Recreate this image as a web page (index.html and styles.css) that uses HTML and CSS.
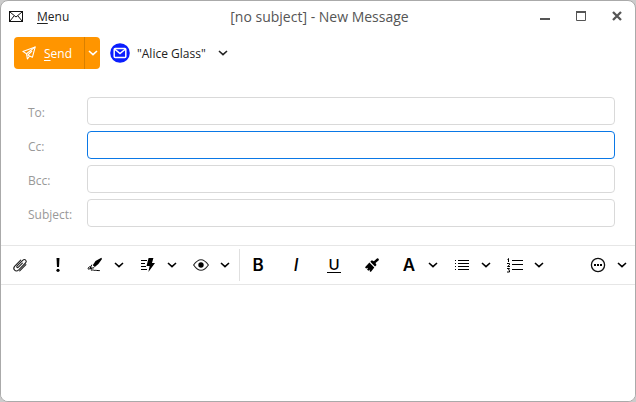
FILE: index.html
```html
<!DOCTYPE html>
<html lang="en">
<head>
    <meta charset="utf-8">
    <title>[no subject] - New Message</title>
    <link rel="stylesheet" href="styles.css">
</head>
<body>
    <svg class="defs" aria-hidden="true">
        <symbol id="chevron" viewBox="0 0 10 6">
            <path d="M1 1l4 3.6L9 1" fill="none" stroke="currentColor" stroke-width="1.6"/>
        </symbol>
    </svg>

    <div class="window">
        <header class="titlebar">
            <div class="titlebar-left">
                <svg class="app-icon" width="14" height="11" viewBox="0 0 14 11" fill="none" stroke="#111">
                    <rect x=".5" y=".5" width="13" height="10"/>
                    <path d="M1 1l6 5 6-5M1 10l4-5M13 10L9 5"/>
                </svg>
                <button class="menu-button" type="button"><u>M</u>enu</button>
            </div>
            <h1 class="title">[no subject] - New Message</h1>
            <div class="window-controls">
                <button type="button" aria-label="Minimize">
                    <svg width="10" height="10" viewBox="0 0 10 10"><path d="M0 8h10" stroke="#555" stroke-width="2"/></svg>
                </button>
                <button type="button" aria-label="Maximize">
                    <svg width="10" height="10" viewBox="0 0 10 10"><path d="M.5 1v8.5h9V1" fill="none" stroke="#555"/><path d="M0 1h10" stroke="#555" stroke-width="2"/></svg>
                </button>
                <button type="button" aria-label="Close">
                    <svg width="10" height="10" viewBox="0 0 10 10"><path d="M1 1l8 8M9 1L1 9" stroke="#555" stroke-width="2.3"/></svg>
                </button>
            </div>
        </header>

        <div class="actions">
            <div class="send">
                <button class="send-main" type="button">
                    <svg width="14" height="14" viewBox="0 0 14 14" fill="none" stroke="#fff" stroke-width="1.1" stroke-linejoin="round">
                        <path d="M13.2.9L.8 5.4l3.7 2.3L5.4 13l2.2-3 2.8 1.3z"/>
                        <path d="M13.2.9L4.5 7.7M10 5L5.8 9.2l1.8.8"/>
                    </svg>
                    <span><u>S</u>end</span>
                </button>
                <button class="send-more" type="button" aria-label="Send options">
                    <svg width="10" height="6"><use href="#chevron"/></svg>
                </button>
            </div>
            <button class="account" type="button">
                <svg width="20" height="20" viewBox="0 0 20 20" fill="none" stroke="#fff" stroke-width="1.5">
                    <circle cx="10" cy="10" r="9.8" fill="#0a1eff" stroke="none"/>
                    <rect x="4.2" y="5.5" width="11.6" height="9" rx="1"/>
                    <path d="M4.5 6l5.5 4.6L15.5 6"/>
                </svg>
                <span>"Alice Glass"</span>
                <svg width="10" height="6"><use href="#chevron"/></svg>
            </button>
        </div>

        <form class="fields">
            <label for="to">To:</label>
            <input id="to" type="text">
            <label for="cc">Cc:</label>
            <input id="cc" class="active" type="text">
            <label for="bcc">Bcc:</label>
            <input id="bcc" type="text">
            <label for="subject">Subject:</label>
            <input id="subject" type="text">
        </form>

        <div class="toolbar" role="toolbar" aria-label="Formatting">
            <button class="tool" type="button" aria-label="Attach file">
                <svg width="16" height="16" viewBox="0 0 16 16" fill="none" stroke="#222" stroke-width="1.1" stroke-linecap="round">
                    <path d="M10.4 6.2L6.4 10.2c-1 1-2.3-.2-1.3-1.3l5.6-5.6c2.2-2 4.8.6 2.8 2.7l-6.8 6.9c-3 2.7-6.6-.7-3.9-3.8l5.9-6"/>
                    <path d="M13.9 7.6l-6.2 6.2"/>
                </svg>
            </button>
            <button class="tool" type="button" aria-label="High importance">
                <svg width="16" height="16" viewBox="0 0 16 16"><path d="M6.5 1h3l-.5 9H7z"/><circle cx="8" cy="13.3" r="1.6"/></svg>
            </button>
            <div class="split">
                <button class="tool" type="button" aria-label="Signature">
                    <svg width="16" height="16" viewBox="0 0 16 16">
                        <path d="M14.4.8L8.5 4 5.8 8.2l2 1.7 3.6-2.8L15 2z"/>
                        <path d="M4.8 7.7L3 11.5l4.2-.8M3 11.5c-3 2.6-2-2.6.4-1.6 2.3 1-.6 4.2 1.7 3.2 1.3-.6 1.4.5 2.7.3 1.2-.3 2.4.3 5 .2" fill="none" stroke="#000"/>
                    </svg>
                </button>
                <button class="more" type="button" aria-label="Signature options"><svg width="10" height="6"><use href="#chevron"/></svg></button>
            </div>
            <div class="split">
                <button class="tool" type="button" aria-label="Templates">
                    <svg width="16" height="16" viewBox="0 0 16 16">
                        <path d="M1 3.5h6M1 6.5h4M1 9.5h5M1 12.5h6" stroke="#000"/>
                        <path d="M8.6 1h4.8L12 6h3L8.4 15l1.2-6H6.5z"/>
                    </svg>
                </button>
                <button class="more" type="button" aria-label="Template options"><svg width="10" height="6"><use href="#chevron"/></svg></button>
            </div>
            <div class="split">
                <button class="tool" type="button" aria-label="Tracking">
                    <svg width="16" height="16" viewBox="0 0 16 16">
                        <path d="M.6 8Q8-2.6 15.4 8 8 18.6.6 8z" fill="none" stroke="#222" stroke-width="1.1"/>
                        <circle cx="8" cy="8" r="2.7"/>
                    </svg>
                </button>
                <button class="more" type="button" aria-label="Tracking options"><svg width="10" height="6"><use href="#chevron"/></svg></button>
            </div>
            <span class="separator"></span>
            <button class="tool letter" type="button" aria-label="Bold">B</button>
            <button class="tool letter italic" type="button" aria-label="Italic">I</button>
            <button class="tool letter underline" type="button" aria-label="Underline"><span>U</span></button>
            <button class="tool" type="button" aria-label="Copy formatting">
                <svg width="16" height="16" viewBox="0 0 16 16">
                    <path d="M13.2 1.3a1.5 1.5 0 0 1 1.6 2L11.5 6l1 2-1.5 1.5-4.7-4.8 1.5-1.5 2.1 1z"/>
                    <path d="M5.4 5.5l4.9 5L6.8 15l-1.3-1 .8-1.6-2 1.3-1.2-1.2 1-1.8-2 .9L1 10.3z"/>
                </svg>
            </button>
            <div class="split">
                <button class="tool letter" type="button" aria-label="Text style">A</button>
                <button class="more" type="button" aria-label="Text style options"><svg width="10" height="6"><use href="#chevron"/></svg></button>
            </div>
            <div class="split">
                <button class="tool" type="button" aria-label="Bulleted list">
                    <svg width="16" height="16" viewBox="0 0 16 16" stroke="#000">
                        <path d="M4 3.5h11M4 6.5h11M4 9.5h11M4 12.5h11M1 3.5h1M1 6.5h1M1 9.5h1M1 12.5h1"/>
                    </svg>
                </button>
                <button class="more" type="button" aria-label="Bulleted list options"><svg width="10" height="6"><use href="#chevron"/></svg></button>
            </div>
            <div class="split">
                <button class="tool" type="button" aria-label="Numbered list">
                    <svg width="16" height="16" viewBox="0 0 16 16" fill="none" stroke="#000">
                        <path d="M5 3.5h11M5 7.5h11M5 12.5h11"/>
                        <path d="M.5 2.5l1-1V5M0 6.5h2.5v1.3L.5 9.5H3M0 11.5h2.5l-1 1.5 1 .5v1.5H0"/>
                    </svg>
                </button>
                <button class="more" type="button" aria-label="Numbered list options"><svg width="10" height="6"><use href="#chevron"/></svg></button>
            </div>
            <div class="split last">
                <button class="tool" type="button" aria-label="More">
                    <svg width="16" height="16" viewBox="0 0 16 16">
                        <circle cx="8" cy="8" r="6.6" fill="none" stroke="#111" stroke-width="1.3"/>
                        <path d="M4 7h2v2H4zM7 7h2v2H7zM10 7h2v2h-2z"/>
                    </svg>
                </button>
                <button class="more" type="button" aria-label="More options"><svg width="10" height="6"><use href="#chevron"/></svg></button>
            </div>
        </div>

        <textarea class="editor" aria-label="Message body"></textarea>
    </div>
</body>
</html>
```
FILE: styles.css
```css
* {
    box-sizing: border-box;
}

body {
    margin: 0;
    background: #ccc;
    color: #222;
    font-family: "Open Sans", "Noto Sans", sans-serif;
    font-size: 12px;
}

button {
    display: flex;
    align-items: center;
    justify-content: center;
    padding: 0;
    border: none;
    background: none;
    color: inherit;
    font: inherit;
    cursor: pointer;
}

u {
    text-underline-offset: 2px;
}

.defs {
    display: none;
}

.window {
    display: flex;
    flex-direction: column;
    height: 100vh;
    border: 1px solid #aaa;
    border-radius: 8px;
    background: #fff;
    overflow: hidden;
}

/* title bar */
.titlebar {
    display: grid;
    grid-template-columns: 1fr auto 1fr;
    align-items: center;
    height: 30px;
    padding: 0 5px 0 8px;
}

.titlebar-left {
    display: flex;
    align-items: center;
    gap: 14px;
}

.title {
    margin: 0;
    color: #555;
    font-size: 14px;
    font-weight: normal;
}

.window-controls {
    display: flex;
    justify-content: flex-end;
    gap: 10px;
}

.window-controls button {
    width: 26px;
    height: 26px;
}

/* send button and account */
.actions {
    display: flex;
    align-items: center;
    gap: 10px;
    padding: 6px 13px;
}

.send {
    display: flex;
    height: 32px;
    border-radius: 4px;
    background: #ff9500;
    color: #fff;
}

.send-main {
    gap: 8px;
    width: 70px;
    padding-right: 4px;
}

.send-more {
    width: 16px;
    border-left: 1px solid #d98000;
}

.account {
    gap: 7px;
}

.account svg:last-child {
    margin-left: 5px;
}

/* address fields */
.fields {
    display: grid;
    grid-template-columns: 59px 1fr;
    align-items: center;
    gap: 6px 0;
    padding: 22px 20px 18px 27px;
}

.fields label {
    padding-top: 2px;
    color: #999;
}

.fields input {
    width: 100%;
    height: 28px;
    padding: 0 6px;
    border: 1px solid #d9d9d9;
    border-radius: 4px;
    font: inherit;
    outline: none;
}

.fields input:focus,
.fields .active {
    border-color: #0a78e6;
}

/* formatting toolbar */
.toolbar {
    display: flex;
    align-items: center;
    gap: 6px;
    height: 40px;
    padding: 0 5px 0 3px;
    border-top: 1px solid #e6e6e6;
    border-bottom: 1px solid #e6e6e6;
    color: #000;
}

.tool {
    width: 32px;
    height: 32px;
}

.split {
    display: flex;
}

.split .tool {
    width: 30px;
}

.more {
    width: 17px;
}

.last {
    margin-left: auto;
}

.separator {
    width: 1px;
    height: 32px;
    margin-right: -4px;
    background: #e0e0e0;
}

.letter {
    font-family: Inter, sans-serif;
    font-size: 17px;
    font-weight: 600;
}

.italic {
    font-style: italic;
    font-weight: 500;
}

.underline span {
    padding: 0 1px;
    border-bottom: 1px solid #000;
    font-size: 15px;
    font-weight: 500;
    line-height: 14px;
}

.editor {
    flex: 1;
    padding: 8px;
    border: none;
    font: inherit;
    outline: none;
    resize: none;
}
```
